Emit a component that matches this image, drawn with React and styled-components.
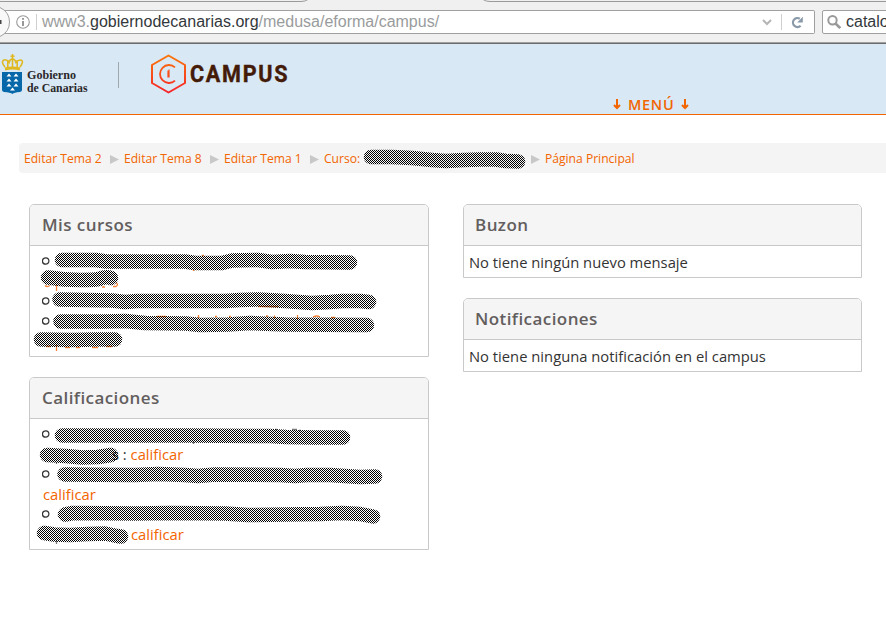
import React from "react";
import styled, { createGlobalStyle, css } from "styled-components";

const Global = createGlobalStyle`
  *, *::before, *::after { box-sizing: border-box; }
  html, body { margin: 0; background: #fff; }
  body { width: 886px; height: 634px; overflow: hidden; font-family: "Open Sans", sans-serif; color: #333; }
  svg { display: block; }
`;

const Page = styled.div`
  width: 886px;
  height: 634px;
  overflow: hidden;
  background: #fff;
`;

/* Browser chrome */
const Chrome = styled.div`
  height: 44px;
  background: #f0f0f0;
  border-bottom: 1px solid #6c6c6c;
  box-shadow: inset 0 -1px 0 #a0a0a0;
`;
const Toolbar = styled.div`
  display: flex;
  height: 24px;
`;
const AddressBar = styled.div`
  display: flex;
  align-items: center;
  width: 815px;
  height: 24px;
  background: #fff;
  border: 1px solid #a0a0a0;
  border-left: 0;
  border-radius: 0 2px 2px 0;
  flex: none;
`;
const BackEdge = styled.svg`
  flex: none;
  overflow: visible;
`;
const Info = styled.svg`
  margin-left: 6px;
  flex: none;
`;
const Separator = styled.span`
  width: 1px;
  height: 16px;
  background: #cfcfcf;
  margin-left: ${(p) => p.$left}px;
  flex: none;
`;
const chromeFont = css`
  font-family: "Liberation Sans", Arial, sans-serif;
  font-size: 16px;
  line-height: 22px;
  white-space: nowrap;
`;
const Url = styled.div`
  ${chromeFont}
  width: 725px;
  padding-left: 5px;
  color: #999c9c;
  flex: none;
  strong { font-weight: 400; color: #33383b; letter-spacing: 0.02px; }
`;
const Chevron = styled.svg`
  flex: none;
`;
const Reload = styled.svg`
  margin-left: 9px;
  flex: none;
`;
const SearchBox = styled.div`
  ${chromeFont}
  display: flex;
  width: 80px;
  height: 24px;
  margin-left: 7px;
  padding-left: 4px;
  gap: 5px;
  align-items: center;
  background: #fff;
  border: 1px solid #a0a0a0;
  border-radius: 2px;
  color: #33383b;
  flex: none;
`;

/* Site header */
const Header = styled.header`
  display: flex;
  height: 71px;
  background: #d9e8f5;
  border-bottom: 1px solid #f26500;
`;
const Brand = styled.svg`
  flex: none;
`;
const Menu = styled.a`
  display: flex;
  align-items: center;
  align-self: flex-end;
  height: 19px;
  margin-left: 313px;
  gap: 7px;
  color: #f26500;
  font-size: 14.5px;
  font-weight: 600;
  line-height: 19px;
  letter-spacing: 0.7px;
`;

/* Breadcrumb */
const Breadcrumb = styled.nav`
  display: flex;
  align-items: center;
  position: relative;
  height: 30px;
  margin: 28px 0 0 19px;
  padding-left: 5px;
  background: #f4f4f4;
  border-radius: 4px 0 0 4px;
  font-size: 12.1px;
  line-height: 30px;
`;
const Crumb = styled.a`
  width: ${(p) => p.$w}px;
  padding-top: 2px;
  color: #f26500;
  white-space: nowrap;
`;
const Arrow = styled.span`
  width: 9px;
  height: 9px;
  margin: 3px 5px 0 0;
  background: #c8c8c8;
  clip-path: polygon(0 0, 100% 50%, 0 100%);
`;

/* Panels */
const Columns = styled.main`
  display: grid;
  grid-template-columns: 400px 399px;
  column-gap: 34px;
  align-items: start;
  margin: 31px 0 0 29px;
`;
const Column = styled.div`
  display: grid;
  gap: 20px;
`;
const PanelBox = styled.section`
  border: 1px solid #c9c9c9;
  border-radius: 5px 5px 0 0;
  overflow: hidden;
`;
const PanelTitle = styled.h2`
  margin: 0;
  height: 41px;
  padding: 0 ${(p) => (p.$wide ? 12 : 11)}px;
  background: #f5f5f5;
  border-bottom: 1px solid #c9c9c9;
  color: #635e5e;
  font-size: 17px;
  font-weight: 600;
  line-height: 40px;
  letter-spacing: 0.43px;
`;
const Message = styled.p`
  margin: 0;
  height: 31px;
  padding-left: 5px;
  font-size: 14.77px;
  line-height: 33px;
`;
const CourseList = styled.div`
  position: relative;
  padding: 6px 0 4px 12px;
`;
const Line = styled.div`
  display: flex;
  align-items: center;
  height: 20px;
  padding-left: ${(p) => p.$indent || 0}px;
  font-size: 14.77px;
  line-height: 18px;
  padding-bottom: 2px;
  white-space: pre;
  a { color: #f26500; }
`;
const Bullet = styled.svg`
  flex: none;
`;
const Overlay = styled.svg`
  position: absolute;
  left: 0;
  top: 0;
`;

function Marker({ id, x, y, w, h, paths, traces = [] }) {
  return (
    <Overlay width={w} height={h} viewBox={`${x} ${y} ${w} ${h}`} fill="none">
      <defs>
        <pattern id={id} width="2" height="2" patternUnits="userSpaceOnUse">
          <path d="M0 0h1v1h-1zM1 1h1v1h-1z" fill="#000" shapeRendering="crispEdges" />
        </pattern>
      </defs>
      {traces.map((t) => (
        <path key={t.d} d={t.d} stroke={t.c || "#f5843a"} strokeWidth="1.3" />
      ))}
      {paths.map((d) => (
        <path key={d} d={d} stroke={`url(#${id})`} strokeWidth="14.5" strokeLinecap="round" strokeLinejoin="round" />
      ))}
    </Overlay>
  );
}

function Panel({ title, wide, children }) {
  return (
    <PanelBox>
      <PanelTitle $wide={wide}>{title}</PanelTitle>
      {children}
    </PanelBox>
  );
}

const Dot = () => (
  <Bullet width="8" height="8" viewBox="0 0 8 8">
    <circle cx="3.700" cy="4" r="3.200" fill="none" stroke="#333" strokeWidth="1.200" />
  </Bullet>
);

const DownArrow = () => (
  <svg width="8" height="11" viewBox="0 0 8 11" fill="none" stroke="#f26500" strokeWidth="2">
    <path d="M4 0v9M1 6l3 3 3-3" />
  </svg>
);

const courseMarks = [
  "M62 260L96 260 106 261.5 185 261.5 195 263 222 263 232 260.5 258 260 272 262 290 261 305 262 350 262.5",
  "M48 277.5Q64 280 80 280T99 279Q106 276 111 278",
  "M59.5 299.5L112 300.5 125 302 137 301 225 301 240 300 258 299.5 285 301 312 303 330 302 342 301 360 301 369 302",
  "M60.5 321.5L105 321.5 125 321 145 323 186 323.5 200 325 228 324.5 250 323 285 324.5 367 325",
  "M41 339.5L72 340 95 339.5 115 339.5",
];
const courseTraces = [
  { d: "M193.5 269v2M202 255.500h2M45 285.500q2 2 5 0M56.500 285v6M102 287h3M113 286.500h3q3-2 0-4" },
  { d: "M198.500 315v4M157 316.500h9M215 316.500h2M229 316.500h2M266 316h2M274.500 315.500v3M297.500 315v4M313 317q4-2 7 0M331 317.500h4M258 306.500h20" },
  { d: "M46 346.500h5M56.500 345v6M65 347.500h5M76 347.500h4M92 347.500h6M106 346.500h6" },
];
const gradeMarks = [
  "M62 435.500L190 435.500 270 436 286 437 314 437.500 343 437.500",
  "M47 455L66 456 82 457.500 98 457 111 455",
  "M64.500 474.500L135 475 158 474 185 475 198 476 215 474.500 280 475 295 476 307 475 330 475 360 477 375 476.500",
  "M65 514.500L73 513 135 513.500 170 513 225 513.500 248 515 285 514.500 320 514 342 513 360 514 373 516.500",
  "M44 533L54 534.500 70 535 88 534 105 533.500 117 536 121 536.500",
];
const gradeTraces = [
  { d: "M193.500 442v2M275 429.500h2M292 429.500h5M299 430.500h2M56.500 462v2M56.500 541v3", c: "#777" },
];

export default function App() {
  return (
    <Page>
      <Global />
      <Chrome>
        <svg width="886" height="10" fill="none" stroke="#9a9a9a">
          <path d="M0 1.500H301Q305 1.500 308-.5M483-.5Q486 1.500 490 1.500H886" />
        </svg>
        <Toolbar>
          <AddressBar>
            <BackEdge width="10" height="22" viewBox="0 0 10 22">
              <path d="M0-3.500Q9.500 1 9.500 11T0 25.500Z" fill="#f8f8f8" />
              <path d="M0-3.500Q9.500 1 9.500 11T0 25.500" fill="none" stroke="#a0a0a0" />
              <rect x="0" y="9" width="1.500" height="4" fill="#444" />
            </BackEdge>
            <Info width="14" height="14" viewBox="0 0 14 14" fill="none">
              <circle cx="7" cy="7" r="6.300" stroke="#999" strokeWidth="1.100" />
              <path d="M7 6v5" stroke="#8c8c8c" strokeWidth="1.800" />
              <path d="M7 3v1.800" stroke="#8c8c8c" strokeWidth="1.800" />
            </Info>
            <Separator $left={6} />
            <Url>
              www3.<strong>gobiernodecanarias.org</strong>/medusa/eforma/campus/
            </Url>
            <Chevron width="10" height="7" viewBox="0 0 10 7" fill="none" stroke="#b5b5b5" strokeWidth="2">
              <path d="M1 1l4 4 4-4" />
            </Chevron>
            <Separator $left={9} />
            <Reload width="13" height="13" viewBox="0 0 13 13" fill="none">
              <path d="M8.800 2.700A4.500 4.500 0 1 0 9.600 9.800" stroke="#8a9aa8" strokeWidth="2.200" />
              <path d="M11.800 .8v5.700H6.200z" fill="#8a9aa8" />
            </Reload>
          </AddressBar>
          <SearchBox>
            <svg width="14" height="14" viewBox="0 0 14 14" fill="none" stroke="#999" strokeWidth="2">
              <circle cx="5.500" cy="5.200" r="4.200" />
              <path d="M8.500 8.500l4.700 4.500" strokeWidth="2.600" />
            </svg>
            catalo
          </SearchBox>
        </Toolbar>
      </Chrome>

      <Header>
        <Brand width="300" height="70" viewBox="0 44 300 70">
          <defs>
            <linearGradient id="campusFlame" x1="0" y1="54" x2="0" y2="94" gradientUnits="userSpaceOnUse">
              <stop offset="0" stopColor="#fa7a08" />
              <stop offset="1" stopColor="#f6202c" />
            </linearGradient>
          </defs>
          <path d="M2 72h20v18q0 1.500-2 2-6 .5-7.500 2-2-1.500-8.500-2-2-.5-2-2z" fill="#0768a9" />
          <g fill="#fff">
            {[[9, 76.5], [16, 76.5], [9, 81.5], [16, 81.5], [9, 86.5], [16, 86.5], [12.5, 90.5]].map(([x, y]) => (
              <path key={`${x}-${y}`} d={`M${x - 2.5} ${y}l2.500-3 2.500 3z`} />
            ))}
          </g>
          <g fill="none" stroke="#dfb91f" strokeWidth="1.600">
            <path d="M5 67Q.8 62 3.500 60.300T9 62.500Q10 59 12.500 59T16 62.500Q19 59 21.500 60.300T20 67" />
            <path d="M12.500 54v14M10.500 56.200h4M7.800 60v7M17.200 60v7" />
            <path d="M5 69q7.500-1.800 15 0" strokeWidth="3" />
          </g>
          <g fill="#2a292b" fontFamily="Liberation Serif, serif" fontWeight="700" fontSize="12">
            <text x="27" y="78.500" textLength="49" lengthAdjust="spacingAndGlyphs">Gobierno</text>
            <text x="27" y="91.500" textLength="60.500" lengthAdjust="spacingAndGlyphs">de Canarias</text>
          </g>
          <path d="M118.500 62v26" stroke="#a0a8af" />
          <g fill="none" stroke="url(#campusFlame)">
            <path d="M168.500 55.500L185 65V83L168.500 92.500 152 83V65Z" strokeWidth="2" strokeLinejoin="round" />
            <path d="M175 67.300A9 9 0 1 0 175 80.700" strokeWidth="1.800" />
            <path d="M168.500 70.500h.01v7" strokeWidth="2.200" />
          </g>
          <text transform="translate(190 82) scale(.92 1)" fill="#431b08" stroke="#431b08" strokeWidth=".4" fontFamily="Roboto, sans-serif" fontWeight="700" fontSize="23.500" textLength="106" lengthAdjust="spacing">CAMPUS</text>
        </Brand>
        <Menu>
          <DownArrow />
          MENÚ
          <DownArrow />
        </Menu>
      </Header>

      <Breadcrumb>
        <Crumb $w={86}>Editar Tema 2</Crumb>
        <Arrow />
        <Crumb $w={86}>Editar Tema 8</Crumb>
        <Arrow />
        <Crumb $w={86}>Editar Tema 1</Crumb>
        <Arrow />
        <Crumb $w={207}>Curso:</Crumb>
        <Arrow />
        <Crumb $w={100}>Página Principal</Crumb>
        <Marker
          id="inkCrumb"
          x={19}
          y={143}
          w={867}
          h={30}
          paths={["M371 157L392 157 412 158 432 160 446 161 464 160 480 159.500 496 159.500 506 161 518 161.500"]}
        />
      </Breadcrumb>

      <Columns>
        <Column>
          <Panel title="Mis cursos" wide>
            <CourseList>
              <Line><Dot /></Line>
              <Line />
              <Line><Dot /></Line>
              <Line><Dot /></Line>
              <Line />
              <Marker id="inkCourses" x={30} y={246} w={398} h={110} paths={courseMarks} traces={courseTraces} />
            </CourseList>
          </Panel>
          <Panel title="Calificaciones" wide>
            <CourseList>
              <Line><Dot /></Line>
              <Line $indent={70}>s : <a>calificar</a></Line>
              <Line><Dot /></Line>
              <Line $indent={1}><a>calificar</a></Line>
              <Line><Dot /></Line>
              <Line $indent={89}><a>calificar</a></Line>
              <Marker id="inkGrades" x={30} y={419} w={398} h={130} paths={gradeMarks} traces={gradeTraces} />
            </CourseList>
          </Panel>
        </Column>
        <Column>
          <Panel title="Buzon">
            <Message>No tiene ningún nuevo mensaje</Message>
          </Panel>
          <Panel title="Notificaciones">
            <Message>No tiene ninguna notificación en el campus</Message>
          </Panel>
        </Column>
      </Columns>
    </Page>
  );
}
